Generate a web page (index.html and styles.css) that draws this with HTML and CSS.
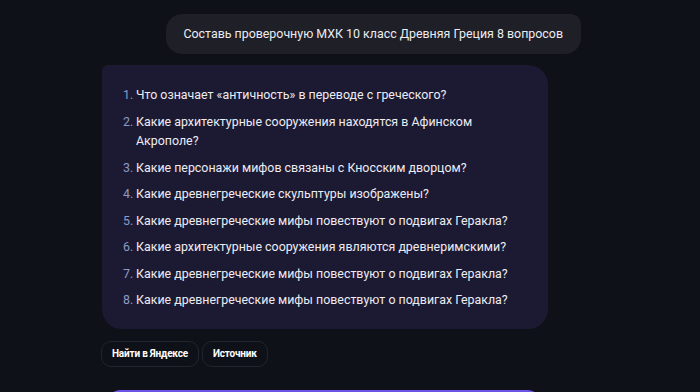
FILE: index.html
```html
<!DOCTYPE html>
<html lang="ru">
  <head>
    <meta charset="UTF-8" />
    <meta name="viewport" content="width=device-width, initial-scale=1.0" />
    <title>Чат</title>
    <link rel="stylesheet" href="styles.css">
  </head>
  <body>
    <div class="chat">
      <div class="user-row">
        <div class="user-bubble">Составь проверочную МХК 10 класс Древняя Греция 8 вопросов</div>
      </div>

      <div class="answer">
        <ol class="questions">
          <li><span class="num">1.</span><span>Что означает «античность» в переводе с греческого?</span></li>
          <li><span class="num">2.</span><span>Какие архитектурные сооружения находятся в Афинском Акрополе?</span></li>
          <li><span class="num">3.</span><span>Какие персонажи мифов связаны с Кносским дворцом?</span></li>
          <li><span class="num">4.</span><span>Какие древнегреческие скульптуры изображены?</span></li>
          <li><span class="num">5.</span><span>Какие древнегреческие мифы повествуют о подвигах Геракла?</span></li>
          <li><span class="num">6.</span><span>Какие архитектурные сооружения являются древнеримскими?</span></li>
          <li><span class="num">7.</span><span>Какие древнегреческие мифы повествуют о подвигах Геракла?</span></li>
          <li><span class="num">8.</span><span>Какие древнегреческие мифы повествуют о подвигах Геракла?</span></li>
        </ol>
      </div>

      <div class="actions">
        <button class="chip">Найти в Яндексе</button>
        <button class="chip">Источник</button>
      </div>

      <div class="composer"></div>
    </div>
  </body>
</html>
```

FILE: styles.css
```css
body {
  margin: 0;
  padding: 0;
  background-color: #0f1118;
  font-family: Roboto, "Noto Sans", Arial, sans-serif;
  color: #e8e8ee;
  overflow: hidden;
}
.chat {
  width: 480px;
  margin-left: 101px;
  padding-top: 14px;
  display: flex;
  flex-direction: column;
}
.user-row {
  display: flex;
  justify-content: flex-end;
}
.user-bubble {
  background-color: #1e1f27;
  border-radius: 16px 10px 16px 16px;
  padding: 0 18px 0 17px;
  height: 40px;
  line-height: 40px;
  font-size: 12.4px;
  color: #ececf0;
}
.answer {
  width: 446px;
  box-sizing: border-box;
  margin-top: 11px;
  margin-left: 1px;
  background-color: #1c1a33;
  border-radius: 6px 20px 20px 20px;
  padding: 20px 20px 19px 21px;
}
.questions {
  list-style: none;
  margin: 0;
  padding: 0;
  display: flex;
  flex-direction: column;
  gap: 7px;
}
.questions li {
  display: flex;
  font-size: 12.4px;
  line-height: 19.5px;
  color: #ececf2;
}
.num {
  color: #8b9bc6;
  width: 13px;
  flex-shrink: 0;
}
.actions {
  display: flex;
  gap: 3px;
  margin-top: 12px;
}
.chip {
  font-family: inherit;
  background: transparent;
  border: 1px solid #23252e;
  border-radius: 10px;
  color: #ffffff;
  font-size: 10px;
  letter-spacing: -0.2px;
  font-weight: 700;
  height: 26px;
  padding: 0 10px;
}
.composer {
  margin-top: 23px;
  margin-left: 4px;
  width: 438px;
  height: 60px;
  box-sizing: border-box;
  border: 2px solid #6a52e6;
  border-radius: 16px;
  background-color: #13141c;
}
```
